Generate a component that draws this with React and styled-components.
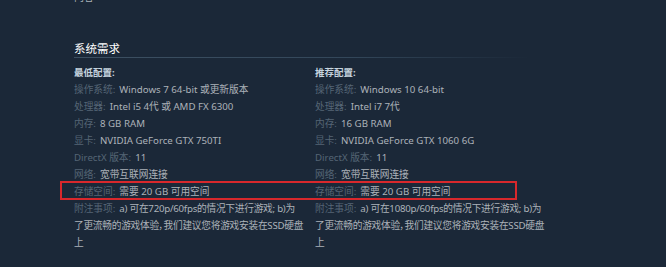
import React from 'react';
import styled, { createGlobalStyle } from 'styled-components';

const GlobalStyle = createGlobalStyle`
  html, body {
    margin: 0;
    padding: 0;
    background: #1b2838;
    overflow: hidden;
  }
  body {
    font-family: "Noto Sans", "Noto Sans CJK SC", sans-serif;
  }
`;

const Page = styled.div`
  position: relative;
  width: 666px;
  height: 267px;
  padding-left: 74px;
  box-sizing: border-box;
  overflow: hidden;
`;

const Cut = styled.div`
  margin-top: -11px;
  height: 17px;
  font-size: 10px;
  line-height: 17px;
  color: #acb2b8;
`;

const Title = styled.h2`
  margin: 35px 0 0;
  width: 456px;
  font-size: 11.5px;
  font-weight: 400;
  line-height: 16px;
  color: #ffffff;
  padding-bottom: 1px;
  background: linear-gradient(to right, #3d5062 0%, #33475a 60%, rgba(51, 71, 90, 0) 100%) left bottom / 100% 1px no-repeat;
`;

const Columns = styled.div`
  display: flex;
  gap: 1px;
  margin-top: 6px;
`;

const Column = styled.div`
  width: 240px;
`;

const Heading = styled.div`
  font-size: 9.5px;
  font-weight: 700;
  line-height: 17px;
  color: #c6d4df;
`;

const Row = styled.div`
  font-size: 9.7px;
  line-height: 17px;
  color: #acb2b8;
  white-space: pre;
  letter-spacing: ${({ $tight }) => ($tight ? '-0.25px' : 'normal')};
  font-feature-settings: ${({ $tight }) => ($tight ? '"palt"' : 'normal')};
`;

const Label = styled.span`
  color: #556575;
  margin-right: 4px;
  letter-spacing: normal;
`;

const Highlight = styled.div`
  position: absolute;
  left: 60px;
  top: 181px;
  width: 457px;
  height: 19px;
  border: 2px solid #d8282c;
  box-sizing: border-box;
  pointer-events: none;
`;

const minimum = [
  ['操作系统:', 'Windows 7 64-bit 或更新版本'],
  ['处理器:', 'Intel i5 4代 或 AMD FX 6300'],
  ['内存:', '8 GB RAM'],
  ['显卡:', 'NVIDIA GeForce GTX 750TI'],
  ['DirectX 版本:', '11'],
  ['网络:', '宽带互联网连接'],
  ['存储空间:', '需要 20 GB 可用空间'],
  ['附注事项:', 'a) 可在720p/60fps的情况下进行游戏; b)为\n了更流畅的游戏体验，我们建议您将游戏安装在SSD硬盘\n上'],
];

const recommended = [
  ['操作系统:', 'Windows 10 64-bit'],
  ['处理器:', 'Intel i7 7代'],
  ['内存:', '16 GB RAM'],
  ['显卡:', 'NVIDIA GeForce GTX 1060 6G'],
  ['DirectX 版本:', '11'],
  ['网络:', '宽带互联网连接'],
  ['存储空间:', '需要 20 GB 可用空间'],
  ['附注事项:', 'a) 可在1080p/60fps的情况下进行游戏; b)为\n了更流畅的游戏体验，我们建议您将游戏安装在SSD硬盘\n上'],
];

function Specs({ title, rows }) {
  return (
    <Column>
      <Heading>{title}</Heading>
      {rows.map(([label, value]) => (
        <Row key={label} $tight={value.includes('\n')}>
          <Label>{label}</Label>
          {value}
        </Row>
      ))}
    </Column>
  );
}

export default function App() {
  return (
    <Page>
      <GlobalStyle />
      <Cut>内容</Cut>
      <Title>系统需求</Title>
      <Columns>
        <Specs title="最低配置:" rows={minimum} />
        <Specs title="推荐配置:" rows={recommended} />
      </Columns>
      <Highlight />
    </Page>
  );
}
